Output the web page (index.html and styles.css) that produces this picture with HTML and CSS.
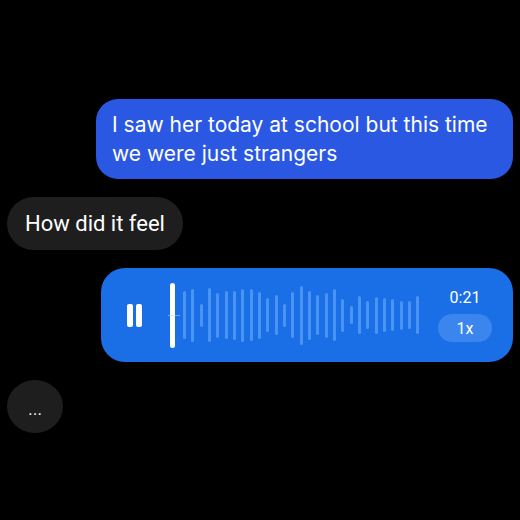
FILE: index.html
```html
<!DOCTYPE html>
<html lang="en">
<head>
  <meta charset="UTF-8" />
  <meta name="viewport" content="width=device-width, initial-scale=1.0"/>
  <title>Chat</title>
  <link rel="stylesheet" href="styles.css">
</head>
<body>
  <div class="chat">
    <div class="msg out">
      <div class="bubble text-bubble">I saw her today at school but this time we were just strangers</div>
    </div>

    <div class="msg in">
      <div class="bubble gray-bubble">How did it feel</div>
    </div>

    <div class="msg out">
      <div class="bubble voice">
        <div class="pause"><span></span><span></span></div>
        <div class="playhead"></div>
        <div class="wave">
          <span style="height:48px"></span>
          <span style="height:53px"></span>
          <span style="height:23px"></span>
          <span style="height:54px"></span>
          <span style="height:45px"></span>
          <span style="height:48px"></span>
          <span style="height:49px"></span>
          <span style="height:53px"></span>
          <span style="height:52px"></span>
          <span style="height:47px"></span>
          <span style="height:34px"></span>
          <span style="height:40px"></span>
          <span style="height:23px"></span>
          <span style="height:46px"></span>
          <span style="height:59px"></span>
          <span style="height:49px"></span>
          <span style="height:40px"></span>
          <span style="height:45px"></span>
          <span style="height:52px"></span>
          <span style="height:33px"></span>
          <span style="height:18px"></span>
          <span style="height:38px"></span>
          <span style="height:28px"></span>
          <span style="height:37px"></span>
          <span style="height:34px"></span>
          <span style="height:32px"></span>
          <span style="height:29px"></span>
          <span style="height:28px"></span>
          <span style="height:38px"></span>
        </div>
        <div class="voice-meta">
          <div class="duration">0:21</div>
          <div class="speed">1x</div>
        </div>
      </div>
    </div>

    <div class="msg in">
      <div class="bubble typing">…</div>
    </div>
  </div>
</body>
</html>
```

FILE: styles.css
```css
body {
  margin: 0;
  background: #000;
  width: 520px;
  height: 520px;
  overflow: hidden;
  font-family: 'Inter', 'Noto Sans', sans-serif;
  color: #fff;
}

.chat {
  display: flex;
  flex-direction: column;
  gap: 18px;
  padding: 99px 7px 0 7px;
}

.msg {
  display: flex;
}

.msg.out {
  justify-content: flex-end;
}

.msg.in {
  justify-content: flex-start;
}

.bubble {
  box-sizing: border-box;
}

.text-bubble {
  width: 417px;
  padding: 11px 16px;
  background: #2a58e2;
  border-radius: 22px;
  font-size: 21px;
  line-height: 29px;
}

.gray-bubble {
  height: 53px;
  padding: 0 18px;
  display: flex;
  align-items: center;
  background: #1e1e1e;
  border-radius: 27px;
  font-family: 'Roboto', sans-serif;
  font-size: 22px;
}

.voice {
  width: 412px;
  height: 94px;
  display: flex;
  align-items: center;
  padding: 0 21px 0 26px;
  background: #1a6fe6;
  border-radius: 24px;
}

.pause {
  display: flex;
  gap: 3px;
}

.pause span {
  width: 6px;
  height: 23px;
  background: #fff;
  border-radius: 2px;
}

.playhead {
  position: relative;
  width: 5px;
  height: 65px;
  margin-left: 28px;
  background: #fff;
  border-radius: 3px;
}

.playhead::before {
  content: '';
  position: absolute;
  left: -2px;
  top: 32px;
  width: 12px;
  height: 1px;
  background: rgba(200, 220, 255, 0.5);
}

.wave {
  display: flex;
  align-items: center;
  gap: 5.33px;
  margin-left: 8px;
}

.wave span {
  width: 3px;
  background: #4a94f4;
  border-radius: 2px;
}

.voice-meta {
  display: flex;
  flex-direction: column;
  align-items: center;
  gap: 6px;
  margin-left: auto;
  font-family: 'Roboto', sans-serif;
}

.duration {
  font-size: 16px;
  line-height: 20px;
}

.speed {
  width: 54px;
  height: 28px;
  display: flex;
  align-items: center;
  justify-content: center;
  background: #3a86ee;
  border-radius: 14px;
  font-size: 16px;
}

.typing {
  width: 56px;
  height: 53px;
  display: flex;
  align-items: center;
  justify-content: center;
  padding-top: 6px;
  background: #1e1e1e;
  border-radius: 50%;
  font-family: 'DejaVu Sans', sans-serif;
  font-size: 14px;
}
```
